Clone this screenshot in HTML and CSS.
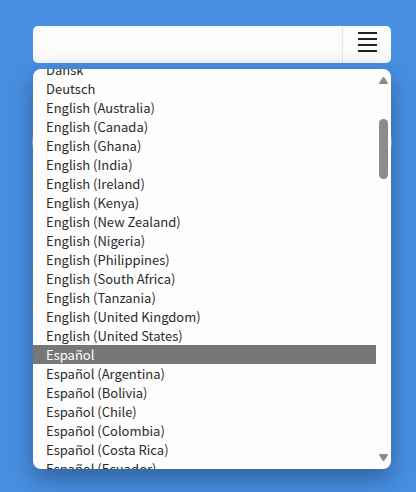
FILE: index.html
```html
<!DOCTYPE html>
<html lang="es">
<head>
<meta charset="utf-8">
<meta name="viewport" content="width=device-width, initial-scale=1">
<title>Idioma</title>
<link rel="stylesheet" href="styles.css">
</head>
<body>
<main class="picker">
  <div class="field">
    <input class="field-input" type="text" aria-label="Idioma">
    <button class="field-button" type="button" aria-label="Lista">
      <svg class="menu-icon" width="19" height="20" viewBox="0 0 19 20" aria-hidden="true">
        <path d="M0 0h19v2H0zM0 6h19v2H0zM0 12h19v2H0zM0 18h19v2H0z" fill="#222"/>
      </svg>
    </button>
  </div>
  <div class="popup">
    <div class="panel">
      <select class="list" id="languages" size="21" aria-label="Idiomas">
        <option>Dansk</option>
        <option>Deutsch</option>
        <option>English (Australia)</option>
        <option>English (Canada)</option>
        <option>English (Ghana)</option>
        <option>English (India)</option>
        <option>English (Ireland)</option>
        <option>English (Kenya)</option>
        <option>English (New Zealand)</option>
        <option>English (Nigeria)</option>
        <option>English (Philippines)</option>
        <option>English (South Africa)</option>
        <option>English (Tanzania)</option>
        <option>English (United Kingdom)</option>
        <option>English (United States)</option>
        <option selected>Español</option>
        <option>Español (Argentina)</option>
        <option>Español (Bolivia)</option>
        <option>Español (Chile)</option>
        <option>Español (Colombia)</option>
        <option>Español (Costa Rica)</option>
        <option>Español (Ecuador)</option>
      </select>
      <div class="scrollbar" aria-hidden="true">
        <svg width="9" height="7" viewBox="0 0 9 7"><path d="M4.5 0Q5.2 0 5.8 1L8.7 5.4Q9.3 7 8 7H1Q-.3 7 .3 5.4L3.2 1Q3.8 0 4.5 0z" fill="#8b8b8b"/></svg>
        <div class="track"><div class="thumb"></div></div>
        <svg width="9" height="7" viewBox="0 0 9 7"><path d="M4.5 7Q5.2 7 5.8 6L8.7 1.6Q9.3 0 8 0H1Q-.3 0 .3 1.6L3.2 6Q3.8 7 4.5 7z" fill="#8b8b8b"/></svg>
      </div>
    </div>
  </div>
</main>
<script src="script.js"></script>
</body>
</html>
```
FILE: styles.css
```css
* {
  box-sizing: border-box;
}

body {
  margin: 0;
  min-height: 100vh;
  background: #488fe1;
  font-family: "Noto Sans CJK SC", "Noto Sans", sans-serif;
  font-size: 13px;
  color: #2b2b2b;
}

.picker {
  display: flex;
  flex-direction: column;
  gap: 6px;
  padding: 26px 25px 23px 33px;
}

.field {
  display: flex;
  height: 37px;
  border-radius: 5px;
  background: linear-gradient(#fcfcfc 75%, #f7f7f7);
}

.field-input {
  flex: 1;
  min-width: 0;
  padding: 0 13px;
  border: 0;
  background: none;
  font: inherit;
  color: inherit;
}

.field-button {
  display: flex;
  align-items: center;
  justify-content: center;
  width: 49px;
  padding: 0 0 5px 1px;
  border: 0;
  border-left: 1px solid #e4e4e4;
  background: none;
}

.popup {
  position: relative;
  z-index: 0;
}

/* Ends of the pill button that the open list covers */
.popup::before {
  content: "";
  position: absolute;
  z-index: -1;
  top: 54px;
  left: -1px;
  right: -1px;
  height: 38px;
  border-radius: 19px;
  background: #b4cdeb;
}

.panel {
  display: flex;
  height: 400px;
  overflow: hidden;
  border-radius: 8px;
  background: #fdfdfd;
  box-shadow: 0 10px 24px rgba(35, 65, 105, 0.58);
}

.list {
  flex: 1;
  min-width: 0;
  height: 400px;
  padding: 0;
  border: 0;
  outline: 0;
  overflow: hidden;
  background: none;
  font: inherit;
  color: inherit;
}

.list option {
  height: 19px;
  min-height: 19px;
  padding: 0 13px;
  line-height: 16px;
}

.list option:checked {
  background: #777 linear-gradient(#777, #777);
  color: #fff;
}

.scrollbar {
  display: flex;
  flex-direction: column;
  align-items: center;
  width: 15px;
  padding: 8px 0;
}

.track {
  flex: 1;
  padding-top: 35px;
}

.thumb {
  width: 9px;
  height: 60px;
  border-radius: 5px;
  background: #8b8b8b;
}
```
FILE: script.js
```js
document.getElementById("languages").scrollTop = 9;
```
